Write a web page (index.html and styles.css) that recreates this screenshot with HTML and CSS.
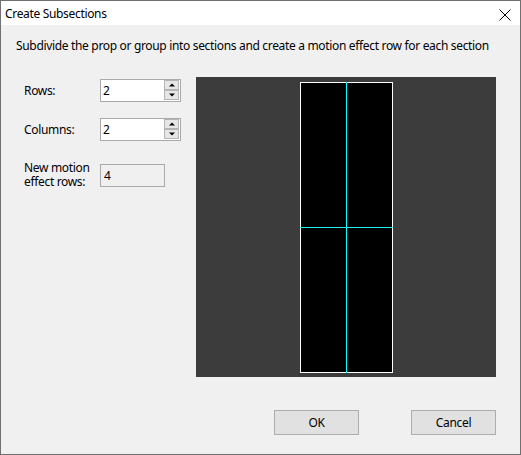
FILE: index.html
```html
<!DOCTYPE html>
<html>
<head>
<meta charset="utf-8">
<link rel="stylesheet" href="styles.css">
</head>
<body>
<div class="window">
  <div class="titlebar">
    <span class="title">Create Subsections</span>
    <svg class="close" width="12" height="12" viewBox="0 0 12 12"><path d="M0.5 0.5L11.5 11.5M11.5 0.5L0.5 11.5" stroke="#000" stroke-width="1" fill="none"/></svg>
  </div>
  <div class="body">
    <p class="desc">Subdivide the prop or group into sections and create a motion effect row for each section</p>
    <div class="main">
      <div class="form">
        <div class="field">
          <span class="label">Rows:</span>
          <div class="spin">
            <span class="val">2</span>
            <div class="spinbtns">
              <div class="sbtn"><svg width="6" height="4" viewBox="0 0 6 4"><path d="M3 0.5L6 3.5H0Z" fill="#000"/></svg></div>
              <div class="sbtn"><svg width="6" height="4" viewBox="0 0 6 4"><path d="M0 0.5H6L3 3.5Z" fill="#000"/></svg></div>
            </div>
          </div>
        </div>
        <div class="field">
          <span class="label">Columns:</span>
          <div class="spin">
            <span class="val">2</span>
            <div class="spinbtns">
              <div class="sbtn"><svg width="6" height="4" viewBox="0 0 6 4"><path d="M3 0.5L6 3.5H0Z" fill="#000"/></svg></div>
              <div class="sbtn"><svg width="6" height="4" viewBox="0 0 6 4"><path d="M0 0.5H6L3 3.5Z" fill="#000"/></svg></div>
            </div>
          </div>
        </div>
        <div class="field field-last">
          <div class="label label-two"><span class="ln">New motion</span><span class="ln">effect rows:</span></div>
          <div class="readonly">4</div>
        </div>
      </div>
      <div class="preview">
        <svg width="93" height="291" viewBox="0 0 93 291">
          <rect x="0" y="0" width="93" height="291" fill="#000"/>
          <rect x="0.5" y="0.5" width="92" height="290" fill="none" stroke="#fff" stroke-width="1"/>
          <line x1="0" y1="145.5" x2="93" y2="145.5" stroke="#22f0f0" stroke-width="1"/>
          <line x1="46.5" y1="0" x2="46.5" y2="291" stroke="#00ffff" stroke-width="1"/>
        </svg>
      </div>
    </div>
    <div class="buttons">
      <div class="btn">OK</div>
      <div class="btn">Cancel</div>
    </div>
  </div>
</div>
</body>
</html>
```
FILE: styles.css
```css
html, body {
  margin: 0;
  padding: 0;
}
body {
  font-family: "Noto Sans", "Open Sans", sans-serif;
  font-size: 12px;
  letter-spacing: -0.33px;
  color: #000;
  background: #f0f0f0;
}
.window {
  width: 521px;
  height: 455px;
  box-sizing: border-box;
  border: 1px solid #707070;
  background: #f0f0f0;
  display: flex;
  flex-direction: column;
}
.titlebar {
  height: 24px;
  background: #fff;
  display: flex;
  align-items: center;
  justify-content: space-between;
  padding: 0 9px 0 4px;
  flex: none;
}
.title {
  line-height: 16px;
  margin-top: 1px;
}
.close {
  display: block;
  margin-top: 3px;
}
.body {
  flex: 1;
  padding: 0 24px 0 15px;
  display: flex;
  flex-direction: column;
}
.desc {
  margin: 13px 0 0 0;
  line-height: 16px;
  white-space: nowrap;
}
.main {
  display: flex;
  margin-top: 23px;
  padding-left: 8px;
}
.form {
  width: 172px;
  flex: none;
  padding-top: 2px;
  display: flex;
  flex-direction: column;
  gap: 16px;
}
.field {
  display: flex;
  align-items: center;
  height: 23px;
}
.field-last {
  margin-top: 7px;
}
.label {
  width: 76px;
  flex: none;
  line-height: 16px;
}
.label-two {
  display: flex;
  flex-direction: column;
  gap: 0;
  margin-top: -2px;
}
.ln {
  display: block;
  height: 14px;
  line-height: 14px;
}
.spin {
  width: 81px;
  height: 23px;
  box-sizing: border-box;
  border: 1px solid #a9a9a9;
  background: #fff;
  display: flex;
  align-items: center;
  justify-content: space-between;
  padding: 0 1px 0 2px;
}
.val {
  line-height: 16px;
}
.spinbtns {
  display: flex;
  flex-direction: column;
  align-self: flex-start;
}
.sbtn {
  width: 15px;
  height: 10px;
  box-sizing: border-box;
  border: 1px solid #b4b4b4;
  background: #e6e6e6;
  display: flex;
  align-items: center;
  justify-content: center;
}
.sbtn svg {
  display: block;
}
.readonly {
  width: 65px;
  height: 23px;
  box-sizing: border-box;
  border: 1px solid #a9a9a9;
  background: #f0f0f0;
  padding-left: 3px;
  display: flex;
  align-items: center;
  line-height: 16px;
}
.preview {
  width: 300px;
  height: 300px;
  background: #3c3c3c;
  display: flex;
  align-items: center;
  justify-content: center;
  flex: none;
}
.preview svg {
  display: block;
  margin-top: 1px;
}
.buttons {
  display: flex;
  justify-content: flex-end;
  gap: 52px;
  margin-top: 33px;
}
.btn {
  width: 85px;
  height: 25px;
  box-sizing: border-box;
  border: 1px solid #adadad;
  background: #e1e1e1;
  display: flex;
  align-items: center;
  justify-content: center;
  line-height: 16px;
}
```
